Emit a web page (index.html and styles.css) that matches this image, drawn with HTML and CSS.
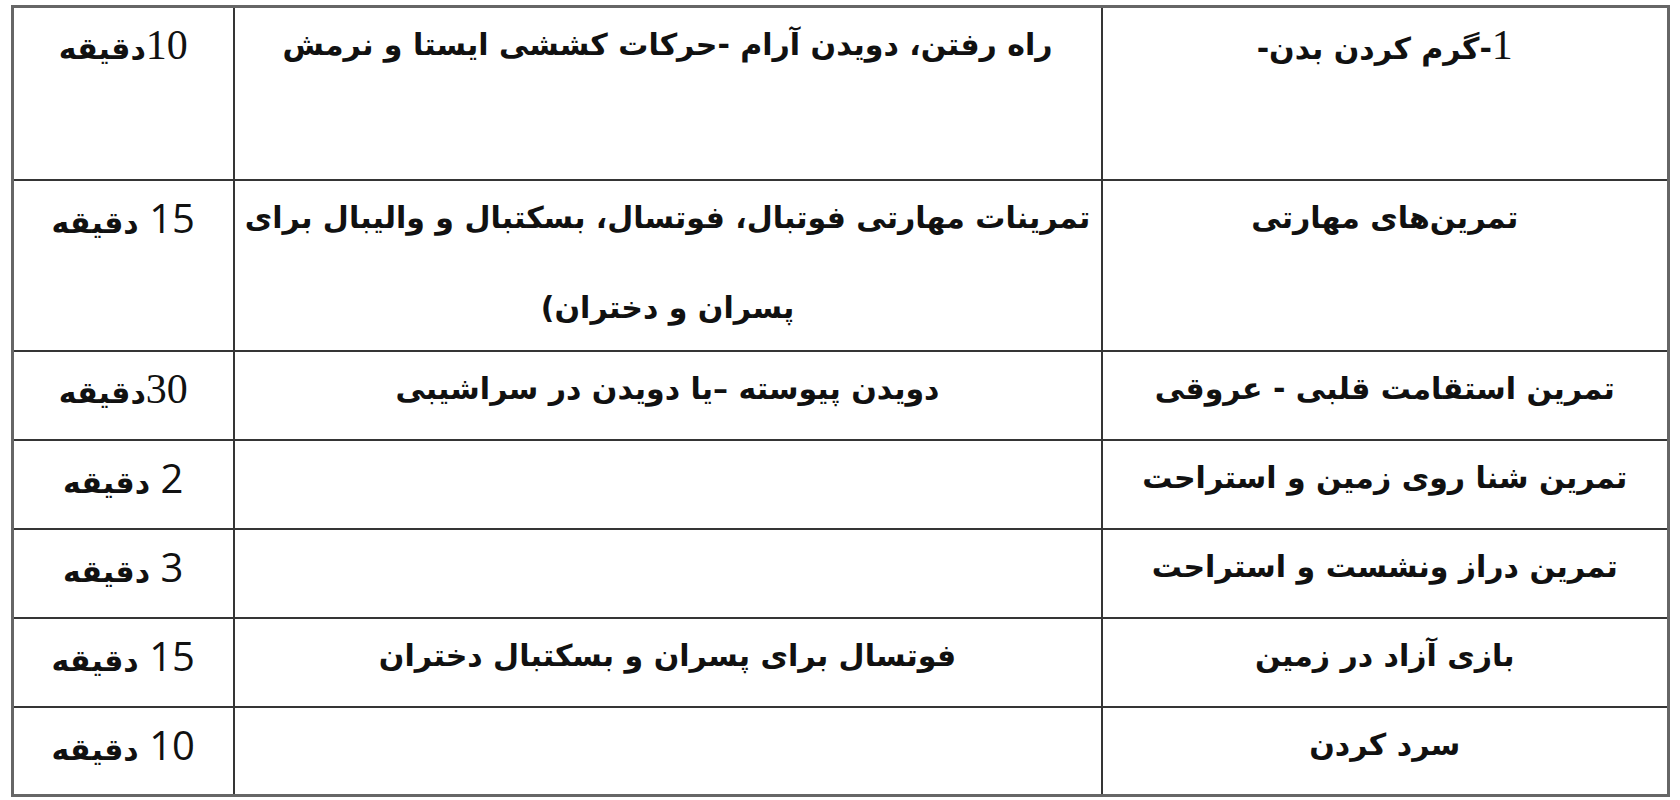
FILE: index.html
```html
<!DOCTYPE html>
<html lang="fa">
<head>
<meta charset="utf-8">
<link rel="stylesheet" href="styles.css">
</head>
<body>
<table class="plan" dir="rtl">
  <colgroup>
    <col class="c-title">
    <col class="c-desc">
    <col class="c-time">
  </colgroup>
  <tr class="r-tall">
    <td><div class="txt"><span class="serif">1</span>-گرم کردن بدن-</div></td>
    <td><div class="txt">راه رفتن، دویدن آرام -حرکات کششی ایستا و نرمش</div></td>
    <td><div class="txt"><span class="serif">10</span>دقیقه</div></td>
  </tr>
  <tr class="r-tall2">
    <td><div class="txt">تمرین‌های مهارتی</div></td>
    <td><div class="txt">تمرینات مهارتی فوتبال، فوتسال، بسکتبال و والیبال برای پسران و دختران)</div></td>
    <td><div class="txt"><span class="sans">15</span> دقیقه</div></td>
  </tr>
  <tr class="r">
    <td><div class="txt">تمرین استقامت قلبی - عروقی</div></td>
    <td><div class="txt">دویدن پیوسته –یا دویدن در سراشیبی</div></td>
    <td><div class="txt"><span class="serif">30</span>دقیقه</div></td>
  </tr>
  <tr class="r">
    <td><div class="txt">تمرین شنا روی زمین و استراحت</div></td>
    <td></td>
    <td><div class="txt"><span class="sans">2</span> دقیقه</div></td>
  </tr>
  <tr class="r">
    <td><div class="txt">تمرین دراز ونشست و استراحت</div></td>
    <td></td>
    <td><div class="txt"><span class="sans">3</span> دقیقه</div></td>
  </tr>
  <tr class="r">
    <td><div class="txt">بازی آزاد در زمین</div></td>
    <td><div class="txt">فوتسال برای پسران و بسکتبال دختران</div></td>
    <td><div class="txt"><span class="sans">15</span> دقیقه</div></td>
  </tr>
  <tr class="r">
    <td><div class="txt">سرد کردن</div></td>
    <td></td>
    <td><div class="txt"><span class="sans">10</span> دقیقه</div></td>
  </tr>
</table>
</body>
</html>
```
FILE: styles.css
```css
html, body {
  margin: 0;
  padding: 0;
  background: #ffffff;
}
body {
  padding: 5px 11px 0 11px;
  font-family: "DejaVu Sans", sans-serif;
  color: #111;
}
.plan {
  border-collapse: collapse;
  table-layout: fixed;
  width: 1658px;
  border: 3px solid #666666;
}
.c-title { width: 567px; }
.c-desc { width: 868px; }
.c-time { width: 221px; }
.plan td {
  border: 2px solid #353535;
  vertical-align: top;
  text-align: center;
  padding: 0 8px;
  font-size: 30px;
  font-weight: bold;
  box-sizing: border-box;
}
.txt {
  line-height: 90px;
  margin: -8px 0 -8px 0;
}
.r-tall td { height: 173px; }
.r-tall2 td { height: 171px; }
.r td { height: 89px; }
.serif {
  font-family: "Liberation Serif", serif;
  font-weight: normal;
  font-size: 42px;
}
.sans {
  font-family: "Open Sans", sans-serif;
  font-weight: normal;
  font-size: 40px;
}
```
